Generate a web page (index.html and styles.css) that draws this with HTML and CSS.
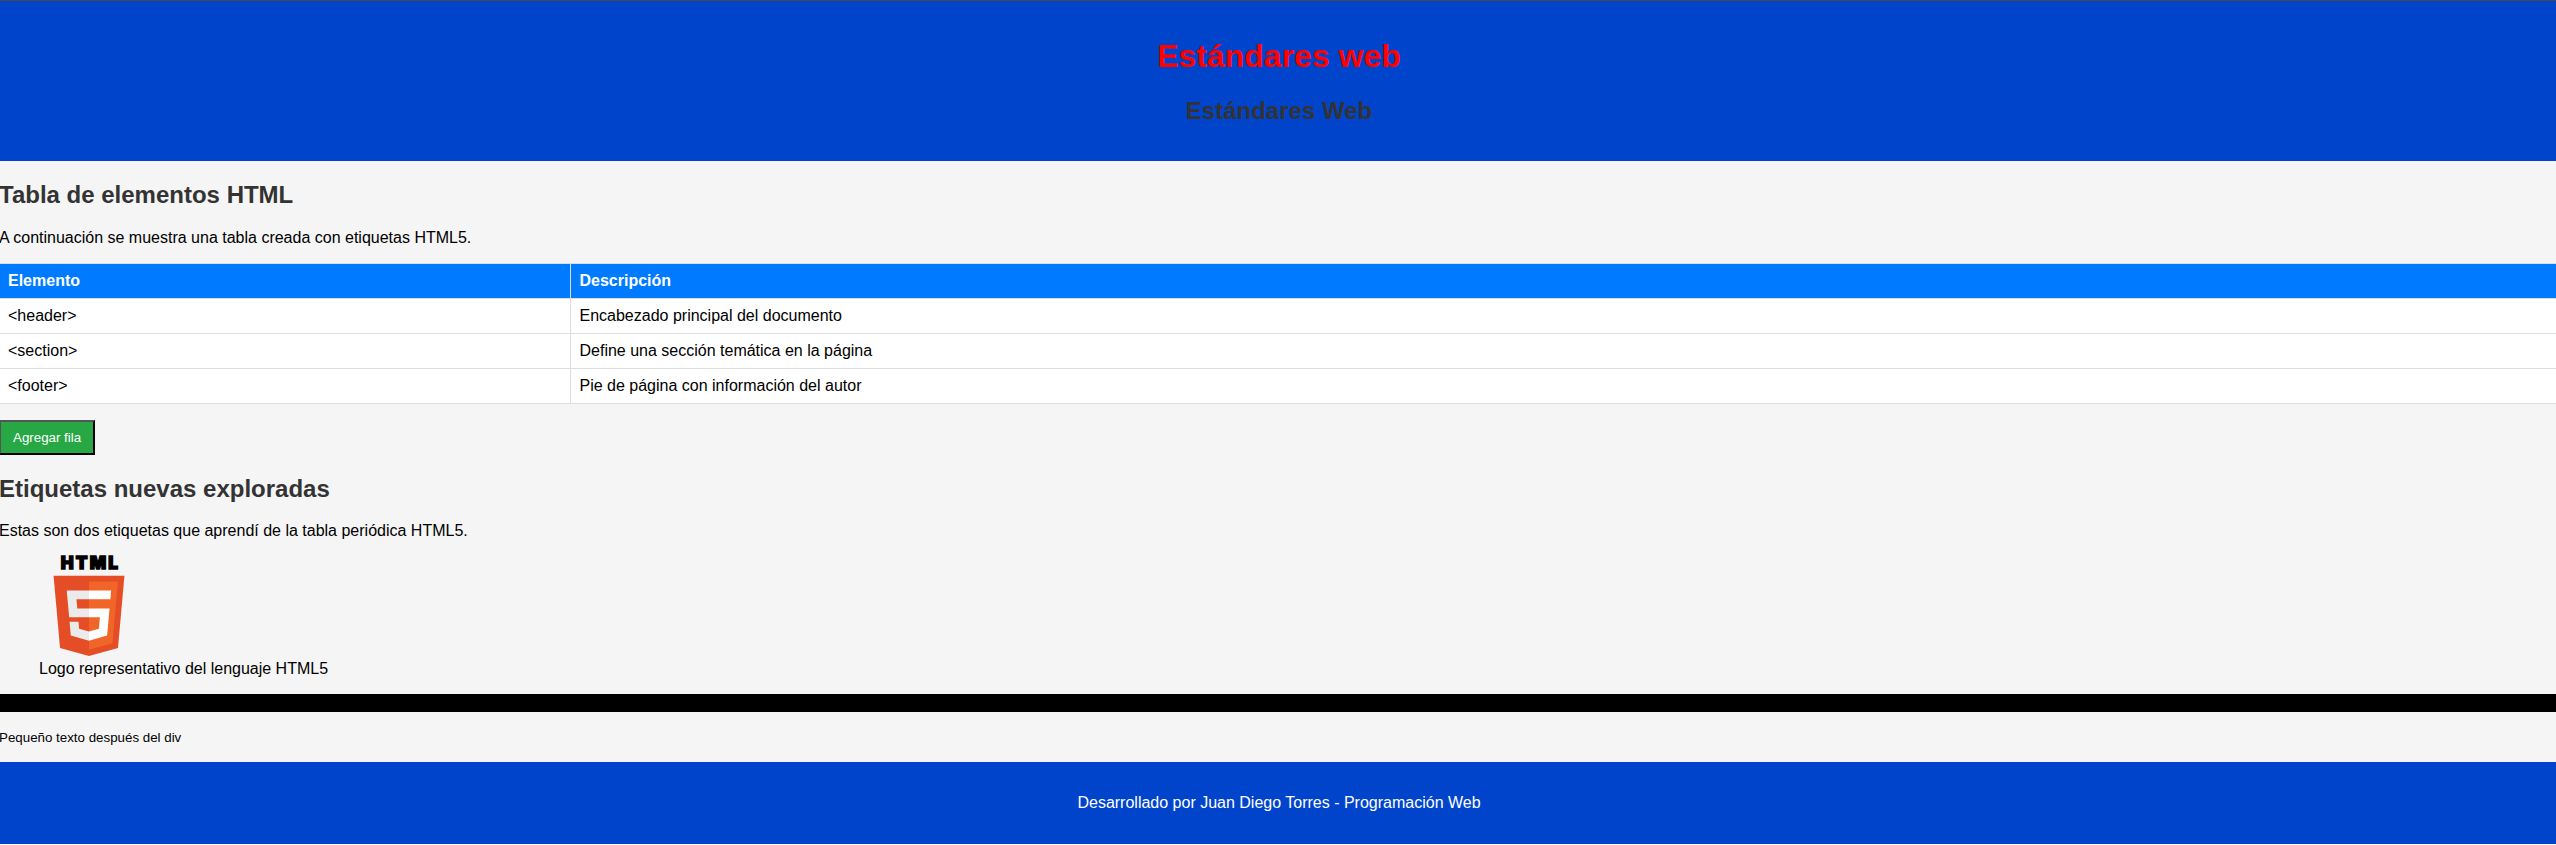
FILE: index.html
```html
<!DOCTYPE html>
<html lang="es">
<head>
<meta charset="utf-8">
<title>Estándares web</title>
<link rel="stylesheet" href="styles.css">
</head>
<body>
<div class="page">
  <header class="banner">
    <h1 class="banner-title">Estándares web</h1>
    <h2 class="heading">Estándares Web</h2>
  </header>
  <section class="section">
    <h2 class="heading heading-table">Tabla de elementos HTML</h2>
    <p class="text">A continuación se muestra una tabla creada con etiquetas HTML5.</p>
    <table class="elements">
      <colgroup><col class="col-name"><col></colgroup>
      <thead><tr><th>Elemento</th><th>Descripción</th></tr></thead>
      <tbody>
        <tr><td>&lt;header&gt;</td><td>Encabezado principal del documento</td></tr>
        <tr><td>&lt;section&gt;</td><td>Define una sección temática en la página</td></tr>
        <tr><td>&lt;footer&gt;</td><td>Pie de página con información del autor</td></tr>
      </tbody>
    </table>
    <button class="add-row" type="button">Agregar fila</button>
  </section>
  <section class="section">
    <h2 class="heading">Etiquetas nuevas exploradas</h2>
    <p class="text">Estas son dos etiquetas que aprendí de la tabla periódica HTML5.</p>
    <figure class="figure">
      <svg class="logo" viewBox="0 0 512 512" width="100" height="100">
        <text class="logo-word" x="111" y="67" textLength="293" lengthAdjust="spacing">HTML</text>
        <path fill="#e44d26" d="M107.6 471l-33-370.4h362.8l-33 370.2L255.7 512z"/>
        <path fill="#f16529" d="M256 480.5V131h148.3L376 447z"/>
        <path fill="#ebebeb" d="M142 176.3h114v45.4h-64.2l4.2 46.5h60v45.3H154.4zM156.4 336.3H202l3.2 36.3 50.8 13.6v47.4l-93.2-26z"/>
        <path fill="#fff" d="M369.6 176.3H255.8v45.4h109.6zM361.3 268.2H255.8v45.4h56l-5.3 59-50.7 13.6v47.2l93-25.8z"/>
      </svg>
      <figcaption>Logo representativo del lenguaje HTML5</figcaption>
    </figure>
  </section>
  <div class="divider"></div>
  <p class="note">Pequeño texto después del div</p>
  <footer class="footer"><p class="text">Desarrollado por Juan Diego Torres - Programación Web</p></footer>
</div>
</body>
</html>
```
FILE: styles.css
```css
html {
  overflow: hidden;
  background: #f5f5f5;
}
body {
  margin: 0;
  font-family: Arial, "Liberation Sans", sans-serif;
  font-size: 16px;
  line-height: 18px;
  color: #000;
}
.page {
  width: 2560px;
  margin-left: -1px;
  border-top: 1px solid #474747;
}
.banner {
  box-sizing: border-box;
  height: 160px;
  padding-top: 16px;
  display: flow-root;
  background: #0044cc;
  text-align: center;
}
.banner-title {
  margin: 21px 0 22px;
  font-size: 32px;
  line-height: 37px;
  color: #f00;
}
.heading {
  margin: 0;
  padding: 20px 0;
  font-size: 24px;
  line-height: 27px;
  color: #333;
}
.banner .heading {
  padding: 0;
}
.heading-table {
  padding-bottom: 21px;
}
.text {
  margin: 0 0 16px;
}
.elements {
  width: 100%;
  table-layout: fixed;
  border-collapse: collapse;
  margin: 16px 0;
  background: #fff;
}
.col-name {
  width: 571px;
}
.elements th,
.elements td {
  height: 18px;
  padding: 8px;
  border: 1px solid #ddd;
  text-align: left;
}
.elements th:last-child,
.elements td:last-child {
  padding-left: 8.5px;
}
.elements th {
  background: #007bff;
  color: #fff;
}
.add-row {
  display: block;
  height: 35px;
  padding: 8px 12px;
  border: 2px outset #000;
  background: #28a745;
  color: #fff;
  font-family: inherit;
  font-size: 13.333px;
  line-height: 15px;
}
.figure {
  margin: 0 40px 16px;
}
.logo {
  display: block;
  margin-bottom: 4px;
  overflow: visible;
}
.logo-word {
  font-family: Inter, Roboto, sans-serif;
  font-size: 88px;
  line-height: 1;
  font-weight: 900;
  stroke: #000;
  stroke-width: 7px;
}
.divider {
  height: 18px;
  background: #000;
}
.note {
  margin: 17px 0 15px;
  font-size: 13.333px;
}
.footer {
  box-sizing: border-box;
  height: 82px;
  padding-top: 32px;
  background: #0044cc;
  color: #fff;
  text-align: center;
}
```
